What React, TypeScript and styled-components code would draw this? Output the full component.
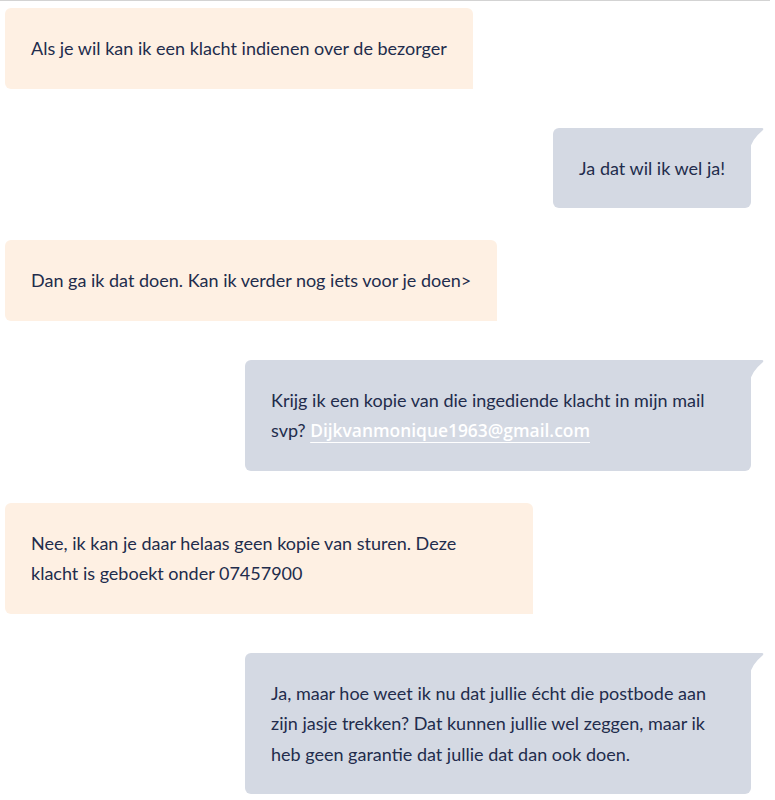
import { FC, PropsWithChildren } from 'react'
import styled, { createGlobalStyle } from 'styled-components'

const GlobalStyle = createGlobalStyle`
  html, body {
    margin: 0;
    padding: 0;
    background: #ffffff;
  }

  body {
    font-family: Lato, 'Noto Sans', sans-serif;
    color: #222c4c;
  }
`

type Side = 'agent' | 'user'

type Message = {
  side: Side
  text: string
  email?: string
}

const MESSAGES: Message[] = [
  { side: 'agent', text: 'Als je wil kan ik een klacht indienen over de bezorger' },
  { side: 'user', text: 'Ja dat wil ik wel ja!' },
  { side: 'agent', text: 'Dan ga ik dat doen. Kan ik verder nog iets voor je doen>' },
  {
    side: 'user',
    text: 'Krijg ik een kopie van die ingediende klacht in mijn mail svp?',
    email: 'Dijkvanmonique1963@gmail.com',
  },
  {
    side: 'agent',
    text: 'Nee, ik kan je daar helaas geen kopie van sturen. Deze klacht is geboekt onder 07457900',
  },
  {
    side: 'user',
    text: 'Ja, maar hoe weet ik nu dat jullie écht die postbode aan zijn jasje trekken? Dat kunnen jullie wel zeggen, maar ik heb geen garantie dat jullie dat dan ook doen.',
  },
]

const Page = styled.div`
  border-top: 1px solid #d3d3d3;
  padding: 7px 0 20px 5px;
  width: 770px;
  box-sizing: border-box;
  display: flex;
  flex-direction: column;
`

const Row = styled.div<{ side: Side }>`
  display: flex;
  justify-content: ${({ side }) => (side === 'user' ? 'flex-end' : 'flex-start')};
  padding-right: ${({ side }) => (side === 'user' ? '19px' : '0')};
  margin-top: ${({ side }) => (side === 'user' ? '39px' : '32px')};

  &:first-child {
    margin-top: 0;
  }
`

const BubbleBox = styled.div<{ side: Side }>`
  position: relative;
  box-sizing: border-box;
  max-width: ${({ side }) => (side === 'user' ? '506px' : '528px')};
  padding: 25px 26px;
  font-size: 18px;
  line-height: 30.5px;
  background: ${({ side }) => (side === 'user' ? '#d4d9e3' : '#fef0e3')};
  border-radius: ${({ side }) => (side === 'user' ? '6px 0 6px 6px' : '6px 6px 0 6px')};
`

const Tail = styled.svg`
  position: absolute;
  top: 0;
  right: -13px;
  width: 14px;
  height: 22px;
`

const MailLink = styled.a`
  display: inline-block;
  color: #ffffff;
  font-family: 'Open Sans', sans-serif;
  font-weight: 600;
  font-size: 17.4px;
  line-height: 28px;
  text-decoration: underline;
  text-decoration-thickness: 1px;
  text-underline-offset: 5px;
`

const Bubble: FC<PropsWithChildren<{ side: Side }>> = ({ side, children }) => (
  <Row side={side}>
    <BubbleBox side={side}>
      {children}
      {side === 'user' && (
        <Tail viewBox="0 0 14 22" aria-hidden>
          <path d="M0 0 H12 Q14 0 13 2 Q1 12 0 22 Z" fill="#d4d9e3" />
        </Tail>
      )}
    </BubbleBox>
  </Row>
)

const App: FC = () => (
  <>
    <GlobalStyle />
    <Page>
      {MESSAGES.map((m, i) => (
        <Bubble key={i} side={m.side}>
          {m.text}
          {m.email && (
            <>
              {' '}
              <MailLink href={`mailto:${m.email}`}>{m.email}</MailLink>
            </>
          )}
        </Bubble>
      ))}
    </Page>
  </>
)

export default App
